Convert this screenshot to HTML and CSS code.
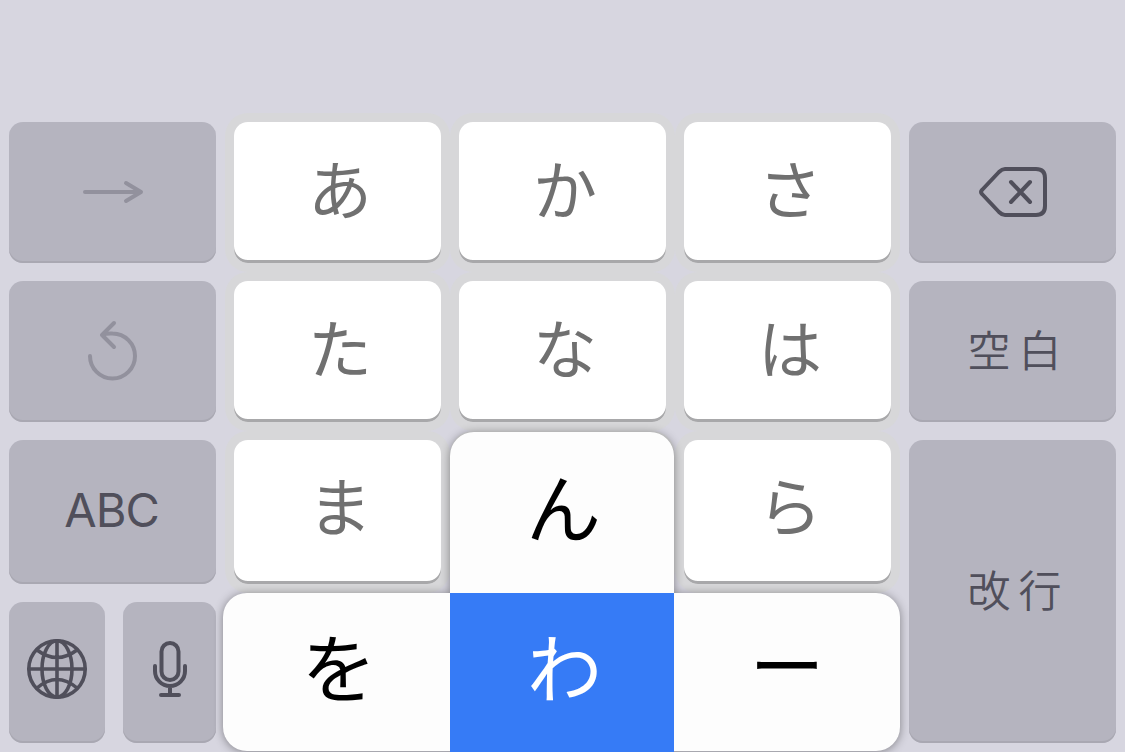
FILE: index.html
```html
<!DOCTYPE html>
<html lang="ja">
<head>
  <meta charset="UTF-8" />
  <meta name="viewport" content="width=device-width, initial-scale=1.0" />
  <title>かなキーボード</title>
  <link rel="stylesheet" href="styles.css">
</head>
<body>

  <div class="keyboard">
    <div class="key side disabled">
      <svg class="icon" width="64" height="32" viewBox="0 0 64 32">
        <path d="M4 16H60M45 7L60 16L45 25" />
      </svg>
    </div>
    <div class="key kana"><span>あ</span></div>
    <div class="key kana"><span>か</span></div>
    <div class="key kana"><span>さ</span></div>
    <div class="key side">
      <svg class="icon delete" width="72" height="56" viewBox="0 0 72 56">
        <path d="M28 5H59Q68 5 68 14V42Q68 51 59 51H28Q25 51 22 48L5 30Q3 28 5 26L22 8Q25 5 28 5Z" />
        <path d="M34 18L53 38M53 18L34 38" />
      </svg>
    </div>

    <div class="key side disabled">
      <svg class="icon undo" width="56" height="64" viewBox="0 0 56 64">
        <path d="M5 37A22.5 22.5 0 1 0 27.5 14.5Q22 14 17 16M29 4L17 16L29 28" />
      </svg>
    </div>
    <div class="key kana"><span>た</span></div>
    <div class="key kana"><span>な</span></div>
    <div class="key kana"><span>は</span></div>
    <div class="key side word"><span>空白</span></div>

    <div class="key side latin"><span>ABC</span></div>
    <div class="key kana tall"><span>ま</span></div>
    <div class="key kana tall"></div>
    <div class="key kana tall"><span>ら</span></div>
    <div class="key side word enter"><span>改行</span></div>

    <div class="pair">
      <div class="key side">
        <svg class="icon globe" width="64" height="64" viewBox="0 0 64 64">
          <circle cx="32" cy="32" r="28.2" />
          <ellipse cx="32" cy="32" rx="15" ry="28.2" />
          <path d="M32 4V60M4 32H60M12 13Q32 28 52 13M12 51Q32 34 52 51" />
        </svg>
      </div>
      <div class="key side">
        <svg class="icon mic" width="40" height="60" viewBox="0 0 40 60">
          <rect x="11.5" y="4" width="17" height="37" rx="8.5" />
          <path d="M5 27V32A15 15 0 0 0 35 32V27M20 47V56M11 56H29" />
        </svg>
      </div>
    </div>

    <!-- フリック候補 -->
    <div class="flick">
      <div class="choice up"><span>ん</span></div>
      <div class="choice left"><span>を</span></div>
      <div class="choice center"><span>わ</span></div>
      <div class="choice right"><span>ー</span></div>
    </div>
  </div>

</body>
</html>
```

FILE: styles.css
```css
* {
  box-sizing: border-box;
}

html, body {
  margin: 0;
  height: 100%;
  overflow: hidden;
  background: #d7d6e0;
  font-family: "Noto Sans CJK JP", sans-serif;
}

.keyboard {
  position: relative;
  width: 1125px;
  height: 752px;
  padding: 122px 9px 0;
  display: grid;
  grid-template-columns: repeat(5, 207px);
  grid-template-rows: 141px 141px 144px 141px;
  gap: 18px;
}

.key {
  display: flex;
  align-items: center;
  justify-content: center;
  border-radius: 14px;
  line-height: 1;
}

.side {
  background: #b5b4bf;
  color: #504f5b;
  padding-bottom: 2px;
  box-shadow: inset 0 -2px 0 #a9a8b2;
}

.disabled {
  color: #92919d;
}

.kana {
  background: #fff;
  color: #707070;
  font-size: 64px;
  padding: 0 0 14px 5px;
  box-shadow: inset 0 -3px 0 #a8a8aa, 0 0 0 9px #d7d7d9;
}

.tall {
  padding-bottom: 19px;
}

.word {
  font-size: 43px;
  font-weight: 350;
  letter-spacing: 8px;
  padding: 0 0 6px 12px;
}

.enter {
  grid-row: 3 / 5;
  grid-column: 5;
}

.latin {
  font-family: Inter, "Liberation Sans", sans-serif;
  font-size: 47px;
  letter-spacing: -1px;
  padding: 0 2px 5px 0;
}

.pair {
  grid-row: 4;
  grid-column: 1;
  display: grid;
  grid-template-columns: 96px 93px;
  gap: 18px;
}

.pair .key {
  padding-bottom: 8px;
}

.icon {
  fill: none;
  stroke: currentColor;
  stroke-width: 4;
  stroke-linecap: round;
  stroke-linejoin: round;
}

.globe {
  stroke-width: 3.6;
}

.flick {
  position: absolute;
  left: 223px;
  top: 432px;
  display: grid;
  grid-template-columns: 227px 224px 226px;
  grid-template-rows: 161px 159px;
  filter: drop-shadow(0 1px 5px rgba(0, 0, 0, 0.4));
}

.choice {
  display: flex;
  align-items: center;
  justify-content: center;
  background: #fdfdfd;
  color: #000;
  font-size: 75px;
  line-height: 1;
  padding: 0 0 16px 5px;
}

.up {
  grid-column: 2;
  padding-left: 3px;
  border-radius: 24px 24px 0 0;
}

.left {
  grid-column: 1;
  height: 158px;
  border-radius: 24px 0 0 24px;
}

.center {
  background: #367bf6;
  color: #fff;
}

.right {
  height: 158px;
  padding: 0 0 21px;
  border-radius: 0 24px 24px 0;
}
```
